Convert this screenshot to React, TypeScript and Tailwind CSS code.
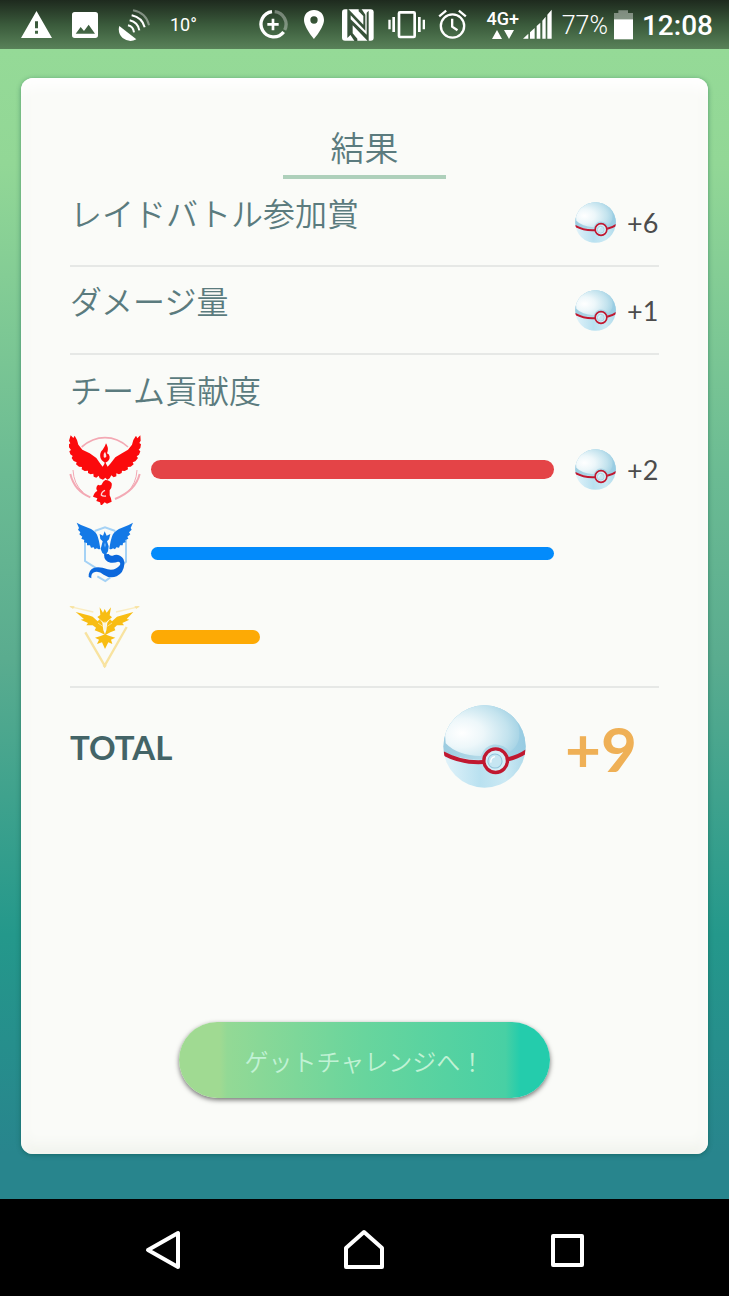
import { useId, type ReactNode } from "react";

const JP = "font-[Lato,'Noto_Sans_CJK_JP',sans-serif]";

const rewards = [
  { label: "レイドバトル参加賞", amount: 6 },
  { label: "ダメージ量", amount: 1 },
];

const teams = [
  { name: "Valor", emblem: <ValorEmblem />, share: 100, bar: "h-[19px] bg-[#e44447]", amount: 2 },
  { name: "Mystic", emblem: <MysticEmblem />, share: 100, bar: "h-[13px] bg-[#038bfb]", amount: null },
  { name: "Instinct", emblem: <InstinctEmblem />, share: 27, bar: "h-[14px] bg-[#fdaa05]", amount: null },
];

function ValorEmblem() {
  return (
    <svg viewBox="42 27 216 216" className="w-[72px] h-[72px]" aria-hidden="true">
      <g fill="none" stroke="#f3a9b4" strokeWidth="5">
        <path d="M80 69 Q112 41 150 41 Q188 41 219 69" />
        <path d="M46 150 Q58 200 106 220" strokeWidth="6" />
        <path d="M254 150 Q242 200 180 225" strokeWidth="6" />
        <path d="M54 138 Q56 180 84 205" strokeWidth="3" />
        <path d="M246 138 Q244 180 216 205" strokeWidth="3" />
      </g>
      <g fill="#fb0a0c">
        <path d="M47 34 L55 42 L59 35 L66 48 L70 62 L82 77 L104 88 L124 102 L136 119 L143 128 L148 120 L150 112 L154 121 L158 128 L167 118 L181 100 L201 88 L219 77 L231 62 L235 48 L243 35 L247 43 L256 34 L257 50 L253 57 L258 61 L256 72 L251 77 L256 82 L252 92 L245 97 L249 102 L241 112 L233 115 L236 121 L227 128 L218 129 L219 136 L209 141 L201 140 L200 147 L192 151 L184 148 L184 157 L176 160 L169 154 L164 163 L157 167 L151 161 L144 167 L134 163 L131 155 L124 161 L116 158 L115 149 L107 151 L99 147 L99 140 L89 141 L80 136 L81 129 L72 128 L63 121 L65 115 L56 111 L50 102 L53 96 L46 91 L43 82 L48 78 L42 70 L41 61 L46 58 L42 50 Z" />
        <path d="M153 58 Q151 66 143 77 Q133 86 136 100 Q138 110 150 116 Q165 110 164 98 Q163 91 156 88 Q161 75 157 67 Q156 62 153 58 Z" />
        <path d="M151 168 Q165 169 170 178 Q172 191 164 199 L164 214 Q169 223 170 233 L156 239 L149 235 L138 246 L135 235 L124 231 L127 223 L114 218 Q118 205 127 201 Q120 192 129 182 Q140 187 142 178 Q144 172 151 168 Z" />
      </g>
      <path d="M150 83 Q143 91 146 99 Q149 104 154 98 Q155 94 150 83 Z" fill="#fbe4e4" />
      <path d="M150 199 Q139 204 139 213 Q143 218 153 216" fill="none" stroke="#fbd9d9" strokeWidth="4" />
    </svg>
  );
}

function MysticEmblem() {
  return (
    <svg viewBox="27 24 216 216" className="w-[72px] h-[72px]" aria-hidden="true">
      <g fill="none" stroke="#a5d2f5" strokeWidth="6">
        <path d="M104 66 L135 55 L166 66" />
        <path d="M75 87 V156 L120 185 M198 87 V158 L184 170 M112 202 L136 216 L151 205" />
      </g>
      <g fill="#1479e6">
        <path d="M50 41 Q63 49 84 56 Q104 63 111 77 Q117 91 121 119 Q116 123 111 118 L104 121 L101 115 L93 116 L90 109 L81 109 L81 102 L72 100 L73 93 L64 89 L67 83 L58 76 L61 70 L54 62 L57 57 Z" />
        <path d="M219 41 Q206 49 186 56 Q166 63 158 77 Q152 91 148 119 Q153 123 159 118 L165 121 L169 115 L177 116 L180 109 L188 109 L189 102 L197 100 L196 93 L205 89 L202 83 L211 76 L207 70 L215 62 L212 57 Z" />
        <path d="M119 75 L129 80 L134 67 L140 80 L151 75 L147 91 L141 97 L146 112 L144 127 L137 139 L127 132 L122 120 L128 97 L121 90 Z" />
      </g>
      <path
        d="M132 136 Q132 158 152 161 Q165 162 174 158 Q183 159 180 168 Q166 186 143 181 Q120 172 103 176 Q85 182 86 204 L94 208 Q92 192 105 189 Q118 186 131 197 Q150 210 170 202 Q191 192 193 166 Q194 147 180 140 Q169 134 158 140 Q150 142 146 135 Z"
        fill="#0c68dc"
      />
      <path d="M135 100 L138 108 L135 116 L132 108 Z" fill="#64acf4" />
    </svg>
  );
}

function InstinctEmblem() {
  return (
    <svg viewBox="27 18 216 216" className="w-[72px] h-[72px]" aria-hidden="true">
      <g fill="none" stroke="#f8e3a0">
        <path d="M76 112 L134 212 L200 96" strokeWidth="7" />
        <path d="M30 35 L100 51 M238 35 L168 51" stroke="#faecc0" strokeWidth="4" />
      </g>
      <path d="M28 33 L44 34 L39 42 Z M239 33 L223 34 L229 42 Z M134 204 L140 212 L134 220 L128 212 Z" fill="#f8e3a0" />
      <g fill="#f8bd13">
        <path d="M119 37 L129 53 L134 42 L140 53 L153 37 L149 61 L156 67 L145 76 L137 83 L132 83 L123 76 L112 66 L121 60 Z" />
        <path d="M47 51 Q78 59 98 65 L113 79 L119 73 L127 83 L130 106 L135 118 L139 106 L142 83 L150 73 L156 79 L171 65 L220 51 L200 72 L208 74 L187 84 L192 91 L171 91 L163 98 L166 106 L151 112 L136 120 L119 112 L104 106 L108 98 L98 91 L79 91 L84 84 L62 74 L72 72 Z" />
        <path d="M105 128 L122 123 L135 118 L149 123 L166 128 L153 134 L157 147 L145 142 L135 162 L126 142 L111 147 L117 134 Z" />
      </g>
      <path d="M133 80 V104 M137 80 V104 M114 84 L128 94 M156 84 L142 94" fill="none" stroke="#fdf0c2" strokeWidth="2" />
    </svg>
  );
}

function PremierBall({ className }: { className: string }) {
  const id = useId();
  return (
    <svg viewBox="42 45 246 246" className={className} aria-hidden="true">
      <defs>
        <radialGradient id={`${id}top`} cx="0.25" cy="0.55" r="0.8">
          <stop offset="0" stopColor="#ffffff" />
          <stop offset="0.35" stopColor="#edf7fa" />
          <stop offset="0.75" stopColor="#c3e3ee" />
          <stop offset="1" stopColor="#a0d0e3" />
        </radialGradient>
        <linearGradient id={`${id}low`} x1="0" y1="0" x2="1" y2="0">
          <stop offset="0" stopColor="#e2f3fa" />
          <stop offset="0.45" stopColor="#b9e1f0" />
          <stop offset="0.75" stopColor="#cbe9f4" />
          <stop offset="1" stopColor="#add9ea" />
        </linearGradient>
        <linearGradient id={`${id}rim`} x1="0" y1="0" x2="1" y2="0">
          <stop offset="0" stopColor="#9ccce0" />
          <stop offset="0.5" stopColor="#b5dbe9" />
          <stop offset="1" stopColor="#96cbe2" />
        </linearGradient>
        <clipPath id={`${id}clip`}>
          <circle cx="165" cy="168" r="122" />
        </clipPath>
      </defs>
      <g clipPath={`url(#${id}clip)`}>
        <rect x="42" y="45" width="246" height="246" fill={`url(#${id}low)`} />
        <path d="M42 45 H288 V182 Q266 196 237 205 H162 Q96 209 42 186 Z" fill={`url(#${id}rim)`} />
        <path d="M42 45 H230 Q278 96 266 150 Q260 170 240 184 Q222 160 192 162 Q165 166 154 196 Q84 194 50 158 Z" fill={`url(#${id}top)`} />
        <path d="M42 188 Q96 218 162 214 M235 206 Q266 199 290 182" fill="none" stroke="#c01830" strokeWidth="12" />
      </g>
      <circle cx="198" cy="210" r="35" fill="#d5eff8" stroke="#c01830" strokeWidth="10" />
      <circle cx="196" cy="211" r="21" fill="#c6e6f2" stroke="#92c5db" strokeWidth="3" />
      <path d="M184 216 Q182 201 196 198" fill="none" stroke="#ffffff" strokeWidth="4" />
    </svg>
  );
}

function Reward({ amount }: { amount: number }) {
  return (
    <div className="flex items-center gap-[11px] w-[84px] shrink-0">
      <PremierBall className="w-[41px] h-[41px] shrink-0" />
      <span className="pt-[2px] text-[27px] leading-8 text-[#4c4c4c]">+{amount}</span>
    </div>
  );
}

function StatusIcon({ box, className, children }: { box: string; className: string; children: ReactNode }) {
  return (
    <svg viewBox={box} className={`shrink-0 ${className}`} fill="#fff" aria-hidden="true">
      {children}
    </svg>
  );
}

function StatusBar() {
  return (
    <header className="flex items-center justify-between h-[49px] pl-[21px] pr-4 text-white font-[Roboto,sans-serif] bg-linear-to-b from-[#1e2a1e] via-[#3a5a3b] to-[#598259]">
      <div className="flex items-center gap-5">
        <StatusIcon box="63 30 93 93" className="w-[31px] h-[31px]">
          <path fillRule="evenodd" d="M109.500 36 L156 117 H63 Z M105 67 H114 V88 H105 Z M105 95 H114 V104 H105 Z" />
        </StatusIcon>
        <StatusIcon box="216 33 78 78" className="w-[26px] h-[26px]">
          <path fillRule="evenodd" d="M224 33 H286 Q294 33 294 41 V103 Q294 111 286 111 H224 Q216 111 216 103 V41 Q216 33 224 33 Z M227 98 H285 L266 71 L252 90 L242 78 Z" />
        </StatusIcon>
        <StatusIcon box="352 26 96 96" className="w-8 h-8">
          <path d="M356 77 L407 117 Q386 128 366 113 Q350 98 356 77 Z" />
          <g fill="none" stroke="#fff" strokeWidth="6">
            <path d="M382 75 Q398 79 400 96" />
            <path d="M387 60 Q412 66 416 90" />
            <path d="M393 45 Q425 52 432 81" />
            <path d="M397 30 Q437 38 445 75" opacity=".4" />
          </g>
        </StatusIcon>
        <span className="text-[18px] leading-6">10°</span>
      </div>
      <div className="flex items-center">
        <StatusIcon box="768 27 90 93" className="w-[30px] h-[31px]">
          <g fill="none" strokeWidth="10">
            <path d="M810 35 A38 38 0 1 0 845 96" stroke="#fff" />
            <path d="M818 35 A38 38 0 0 1 848 90" stroke="#fff" opacity=".35" />
          </g>
          <path d="M809 56 H817 V69 H830 V77 H817 V91 H809 V77 H796 V69 H809 Z" />
        </StatusIcon>
        <StatusIcon box="909 27 60 93" className="w-5 h-[31px] ml-4">
          <path fillRule="evenodd" d="M939 30 C921 30 909 43 909 60 C909 82 939 117 939 117 C939 117 969 82 969 60 C969 43 957 30 939 30 Z M939 49 A11 11 0 1 1 939 71 A11 11 0 1 1 939 49 Z" />
        </StatusIcon>
        <StatusIcon box="34 11 96 96" className="w-8 h-8 ml-[18px]">
          <rect x="34" y="12" width="95" height="94" rx="9" />
          <path
            d="M52 10 L98 58 V32 L84 18 V10 H92 L104 28 V76 L60 30 V88 L50 98 V10 Z M112 108 L66 60 V84 L80 100 V108 H72 L60 90 V42 L108 88 V22 L114 16 V108 Z"
            fill="#375239"
          />
        </StatusIcon>
        <StatusIcon box="66 27 111 93" className="w-[37px] h-[31px] ml-[14px]">
          <rect x="99" y="37" width="47" height="74" rx="3" fill="none" stroke="#fff" strokeWidth="8" />
          <path d="M67 59 H74 V88 H67 Z M79 51 H87 V96 H79 Z M156 51 H164 V96 H156 Z M170 59 H177 V88 H170 Z" />
        </StatusIcon>
        <StatusIcon box="218 28 86 93" className="w-[29px] h-[31px] ml-[13px]">
          <g fill="none" stroke="#fff" strokeWidth="7">
            <circle cx="261" cy="79" r="35" />
            <path d="M221 50 L242 33 M280 33 L301 50 M260 57 V81 L276 92" />
          </g>
        </StatusIcon>
        <div className="flex flex-col items-center ml-[19px] w-[34px] pb-[2px]">
          <span className="text-[18px] leading-5 font-medium">4G+</span>
          <svg viewBox="0 0 22 9" className="w-[22px] h-[9px] mt-px" fill="#fff" aria-hidden="true">
            <path d="M5 0 L10 9 H0 Z M12 0 H22 L17 9 Z" />
          </svg>
        </div>
        <StatusIcon box="474 27 87 93" className="w-[29px] h-[31px] ml-[3px]">
          <path d="M474 116 L490 101 V116 Z M495 97 L509 84 V116 H495 Z M515 78 L526 68 V116 H515 Z M532 62 L542 50 V116 H532 Z M547 44 L560 29 V116 H547 Z" />
        </StatusIcon>
        <span className="ml-[10px] pt-[2px] text-[25px] leading-8 font-light">77%</span>
        <StatusIcon box="744 24 57 93" className="w-[19px] h-[31px] ml-[6px]">
          <path d="M744 56 V36 H757 V28 H786 V36 H801 V56 Z" opacity=".4" />
          <path d="M744 55 H801 V115 H744 Z" />
        </StatusIcon>
        <span className="ml-[9px] pt-[2px] text-[28px] leading-8 font-medium">12:08</span>
      </div>
    </header>
  );
}

function NavBar() {
  return (
    <nav className="grid grid-cols-3 px-[61px] pt-[5px] h-[97px] items-center justify-items-center bg-black">
      <button aria-label="Back" className="p-1">
        <svg viewBox="0 0 40 44" className="w-10 h-11" fill="none" stroke="#fff" strokeWidth="4" strokeLinejoin="round">
          <path d="M36 5 V39 L6 22 Z" />
        </svg>
      </button>
      <button aria-label="Home" className="p-1">
        <svg viewBox="0 0 44 44" className="w-11 h-11" fill="none" stroke="#fff" strokeWidth="4" strokeLinejoin="round">
          <path d="M22 4 L40 20 V39 H4 V20 Z" />
        </svg>
      </button>
      <button aria-label="Recent apps" className="p-1">
        <svg viewBox="0 0 40 44" className="w-10 h-11" fill="none" stroke="#fff" strokeWidth="4" strokeLinejoin="round">
          <path d="M6 8 H35 V37 H6 Z" />
        </svg>
      </button>
    </nav>
  );
}

export default function App() {
  return (
    <div className={`min-h-screen flex flex-col ${JP}`} lang="ja">
      <StatusBar />
      <main className="flex-1 flex flex-col px-[21px] pt-[29px] pb-[45px] bg-[linear-gradient(to_bottom,#95da97_0%,#92d796_10%,#6bbb93_37%,#5aac8f_53%,#24988b_77%,#28858d_96%)]">
        <section className="flex-1 flex flex-col px-[49px] pt-12 pb-14 rounded-xl bg-[#fafbf8] shadow-[0_1px_5px_rgba(0,70,60,0.45),inset_0_8px_14px_#fff,inset_0_-8px_14px_#f0f3ec]">
          <h1 className="self-center w-[163px] h-[53px] text-center text-[34px] leading-[44px] font-[350] text-[#5b7b7e] border-b-4 border-[#aed0bb]">
            結果
          </h1>

          {rewards.map((r) => (
            <div key={r.label} className="flex items-center justify-between h-[88px] border-b-2 border-[#e6e8e6]">
              <h2 className="pb-4 text-[32px] leading-10 font-[350] text-[#5b7b7e]">{r.label}</h2>
              <Reward amount={r.amount} />
            </div>
          ))}

          <div className="pt-4 pb-[7px] border-b-2 border-[#e6e8e6]">
            <h2 className="mb-4 text-[32px] leading-10 font-[350] text-[#5b7b7e]">チーム貢献度</h2>
            {teams.map((team) => (
              <div key={team.name} className="flex items-center h-[84px] -ml-px">
                {team.emblem}
                <div className="flex-1 ml-[10px] mr-[21px]" role="img" aria-label={team.name}>
                  <div className={`rounded-full ${team.bar}`} style={{ width: `${team.share}%` }} />
                </div>
                <div className="w-[84px]">{team.amount && <Reward amount={team.amount} />}</div>
              </div>
            ))}
          </div>

          <div className="flex items-center h-[116px] pr-[22px]">
            <span className="flex-1 pt-[2px] text-[33px] leading-10 font-bold text-[#436467]">TOTAL</span>
            <PremierBall className="w-[83px] h-[83px]" />
            <span className="ml-[39px] pt-1 text-[62px] leading-[72px] font-bold text-[#efb056]">+9</span>
          </div>

          <button className="self-center mt-auto w-[371px] max-w-full h-[76px] pt-1 rounded-full text-[24px] font-[350] text-[#c1f2d5] bg-[linear-gradient(to_right,#a0da92_0%,#a0da92_11%,#93d995_13%,#68d59d_50%,#48d0a4_88%,#24ccac_92%)] shadow-[0_2px_5px_rgba(0,0,0,0.55)]">
            ゲットチャレンジへ！
          </button>
        </section>
      </main>
      <NavBar />
    </div>
  );
}
